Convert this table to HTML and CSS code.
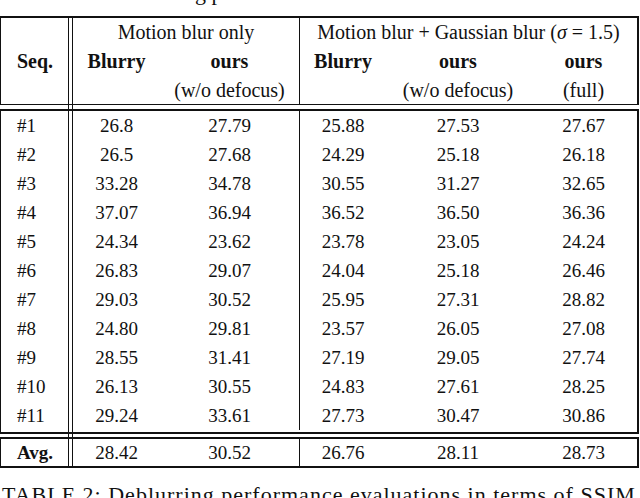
FILE: index.html
```html
<!DOCTYPE html>
<html>
<head>
<meta charset="utf-8">
<link rel="stylesheet" href="styles.css">
</head>
<body>
<div class="prev"><div class="prev-line">ng p</div></div>
<div class="tables">
  <div class="box head">
    <div class="seq seq-head b">Seq.</div>
    <div class="data head-grid">
      <div class="c span2 vr">Motion blur only</div>
      <div class="c span3">Motion blur + Gaussian blur (<i>σ</i> = 1.5)</div>
      <div class="c b">Blurry</div>
      <div class="c b vr">ours</div>
      <div class="c b">Blurry</div>
      <div class="c b">ours</div>
      <div class="c b">ours</div>
      <div class="c"></div>
      <div class="c vr">(w/o defocus)</div>
      <div class="c"></div>
      <div class="c">(w/o defocus)</div>
      <div class="c">(full)</div>
    </div>
  </div>
  <div class="box body">
    <div class="seq seq-body">
      <div class="s">#1</div><div class="s">#2</div><div class="s">#3</div><div class="s">#4</div>
      <div class="s">#5</div><div class="s">#6</div><div class="s">#7</div><div class="s">#8</div>
      <div class="s">#9</div><div class="s">#10</div><div class="s">#11</div>
    </div>
    <div class="data num-grid">
      <div class="c">26.8</div><div class="c vr">27.79</div><div class="c">25.88</div><div class="c">27.53</div><div class="c">27.67</div>
      <div class="c">26.5</div><div class="c vr">27.68</div><div class="c">24.29</div><div class="c">25.18</div><div class="c">26.18</div>
      <div class="c">33.28</div><div class="c vr">34.78</div><div class="c">30.55</div><div class="c">31.27</div><div class="c">32.65</div>
      <div class="c">37.07</div><div class="c vr">36.94</div><div class="c">36.52</div><div class="c">36.50</div><div class="c">36.36</div>
      <div class="c">24.34</div><div class="c vr">23.62</div><div class="c">23.78</div><div class="c">23.05</div><div class="c">24.24</div>
      <div class="c">26.83</div><div class="c vr">29.07</div><div class="c">24.04</div><div class="c">25.18</div><div class="c">26.46</div>
      <div class="c">29.03</div><div class="c vr">30.52</div><div class="c">25.95</div><div class="c">27.31</div><div class="c">28.82</div>
      <div class="c">24.80</div><div class="c vr">29.81</div><div class="c">23.57</div><div class="c">26.05</div><div class="c">27.08</div>
      <div class="c">28.55</div><div class="c vr">31.41</div><div class="c">27.19</div><div class="c">29.05</div><div class="c">27.74</div>
      <div class="c">26.13</div><div class="c vr">30.55</div><div class="c">24.83</div><div class="c">27.61</div><div class="c">28.25</div>
      <div class="c">29.24</div><div class="c vr">33.61</div><div class="c">27.73</div><div class="c">30.47</div><div class="c">30.86</div>
    </div>
  </div>
  <div class="box avg">
    <div class="seq seq-avg b">Avg.</div>
    <div class="data avg-grid">
      <div class="c">28.42</div><div class="c vr">30.52</div><div class="c">26.76</div><div class="c">28.11</div><div class="c">28.73</div>
    </div>
  </div>
</div>
<div class="caption">TABLE 2: Deblurring performance evaluations in terms of SSIM</div>
</body>
</html>
```
FILE: styles.css
```css
* { box-sizing: border-box; }
html, body { margin: 0; padding: 0; background: #fff; }
body {
  width: 640px;
  height: 498px;
  overflow: hidden;
  font-family: "Liberation Serif", "Times New Roman", serif;
  color: #111;
}
.b { font-weight: bold; }

.prev { height: 16px; overflow: hidden; font-size: 22px; }
.prev-line { margin-top: -17px; line-height: 20px; padding-left: 184px; white-space: nowrap; }

.tables {
  width: 639px;
  display: flex;
  flex-direction: column;
  background: linear-gradient(to right,
    transparent 68px, #111 68px, #111 69px, transparent 69px,
    transparent 72px, #111 72px, #111 73px, transparent 73px);
}
.box {
  display: flex;
  background: #fff;
  border: 1px solid #111;
  border-top-width: 2px;
  border-right-width: 2px;
}
.head { border-bottom-width: 1px; }
.body { margin-top: 4px; border-bottom-width: 2px; }
.avg { margin-top: 3px; border-bottom-width: 2px; }

.seq {
  width: 68px;
  flex: none;
  border-right: 1px solid #111;
  padding-left: 16px;
}
.seq-head { display: flex; align-items: center; font-size: 20px; }
.seq-body { display: grid; grid-auto-rows: 29px; padding-bottom: 2px; font-size: 19px; }
.seq-body .s { line-height: 29px; }
.seq-avg { font-size: 19px; line-height: 27px; }

.data {
  flex: 1;
  margin-left: 3px;
  border-left: 1px solid #111;
  display: grid;
  grid-template-columns: 87px 140px 86px 144px 107px;
}
.c { text-align: center; white-space: nowrap; }
.vr { border-right: 1px solid #111; }
.span2 { grid-column: span 2; }
.span3 { grid-column: span 3; }

.head-grid { grid-template-rows: 29px 29px 28px; font-size: 20px; line-height: 29px; }
.num-grid { grid-auto-rows: 29px; padding-bottom: 2px; font-size: 19px; line-height: 29px; }
.avg-grid { grid-auto-rows: 27px; font-size: 19px; line-height: 27px; }

.caption {
  margin-top: 15px;
  padding-left: 2px;
  font-size: 22px;
  line-height: 24px;
  letter-spacing: 1px;
  white-space: nowrap;
}
```
